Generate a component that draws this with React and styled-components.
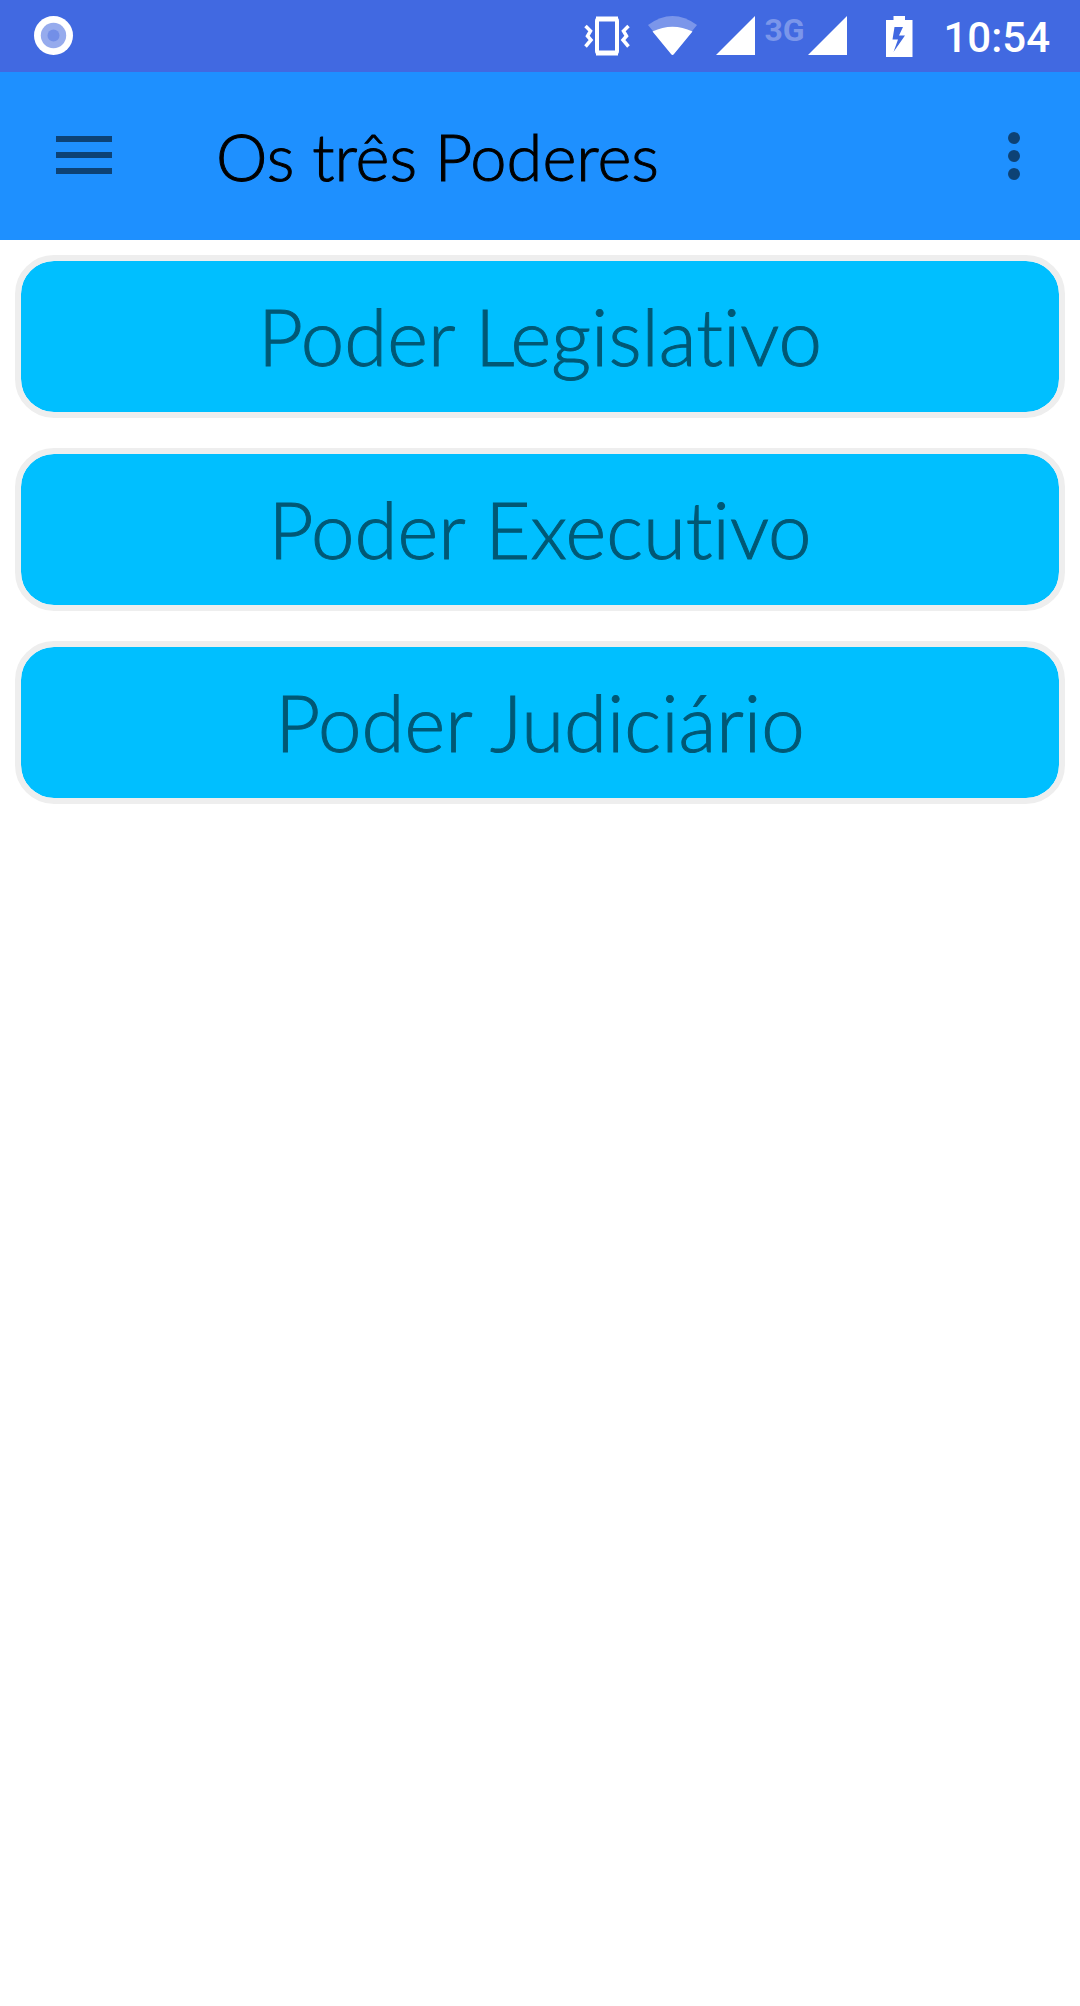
import React from 'react';
import styled, { createGlobalStyle } from 'styled-components';

const GlobalStyle = createGlobalStyle`
  *, *::before, *::after { box-sizing: border-box; }
  body { margin: 0; background: #ffffff; }
`;

const Screen = styled.div`
  min-height: 100vh;
  background: #ffffff;
  font-family: Lato, 'Open Sans', sans-serif;
  font-weight: 300;
  font-variant-ligatures: none;
`;

const StatusBar = styled.div`
  display: flex;
  align-items: center;
  justify-content: space-between;
  height: 72px;
  padding: 0 30px 0 34px;
  background: #4169e1;
  color: #ffffff;
  font-family: Roboto, sans-serif;
`;

const StatusGroup = styled.div`
  display: flex;
  align-items: center;
  gap: 18px;
`;

const Signal = styled.div`
  display: flex;
  align-items: center;
`;

const Icon = styled.svg`
  display: block;
  flex: none;
`;

const NetworkType = styled.span`
  align-self: flex-start;
  width: 52px;
  padding-left: 8px;
  font-size: 32px;
  line-height: 28px;
  font-weight: 700;
  color: #7b96ea;
`;

const Battery = styled.div`
  padding: 0 12px 0 20px;
`;

const Clock = styled.time`
  font-size: 42px;
  line-height: 48px;
  padding-top: 4px;
  font-weight: 500;
`;

const AppBar = styled.header`
  display: flex;
  align-items: center;
  height: 168px;
  padding: 0 24px;
  background: #1e90ff;
`;

const IconButton = styled.button`
  display: flex;
  align-items: center;
  justify-content: center;
  width: ${(p) => p.$width}px;
  height: 120px;
  padding: 0;
  border: 0;
  background: transparent;
  color: rgba(0, 0, 0, 0.54);
`;

const Title = styled.h1`
  flex: 1;
  margin: 0;
  padding-left: 72px;
  font-size: 65px;
  line-height: 80px;
  font-weight: 300;
  color: #000000;
  -webkit-text-stroke: 1px currentColor;
`;

const PowerList = styled.main`
  display: grid;
  gap: 30px;
  padding: 15px;
`;

const PowerButton = styled.button`
  width: 100%;
  padding: 27px 24px 28px;
  border: 6px solid #eeeeee;
  border-radius: 39px;
  background: #00bfff;
  color: #005875;
  font: inherit;
  font-variant-ligatures: none;
  font-size: 78px;
  line-height: 96px;
  background-clip: padding-box;
  -webkit-text-stroke: 1px currentColor;
`;

const powers = ['Poder Legislativo', 'Poder Executivo', 'Poder Judiciário'];

function SignalIcon() {
  return (
    <Icon width="40" height="40" viewBox="0 0 40 40" aria-hidden="true">
      <path d="M39 0V39H0Z" fill="currentColor" />
    </Icon>
  );
}

export default function App() {
  return (
    <Screen>
      <GlobalStyle />
      <StatusBar>
        <Icon width="40" height="40" viewBox="0 0 40 40" aria-hidden="true">
          <circle cx="19.5" cy="19.5" r="19.5" fill="#ffffff" />
          <circle cx="19.5" cy="19.5" r="12.7" fill="#96abed" />
          <circle cx="19.5" cy="19.5" r="6" fill="#738fe7" />
        </Icon>
        <StatusGroup>
          <Icon width="46" height="40" viewBox="0 0 46 40" fill="none" stroke="currentColor" aria-hidden="true">
            <rect x="13" y="3" width="20" height="34" rx="2" strokeWidth="4" />
            <path d="M12 3H34M12 37H34" strokeWidth="5" />
            <path d="M1.5 10 6.5 15 3.5 20 7 24 1.5 30.500M44.500 10 39.500 15 42.500 20 39 24 44.500 30.500" strokeWidth="3.500" />
          </Icon>
          <Icon width="50" height="40" viewBox="0 0 50 40" aria-hidden="true">
            <path d="M0 9Q24.500-9 49 9L24.500 39Z" fill="#7b96ea" />
            <path d="M4.500 15.500Q24.500 6 44.500 15.500L26 38Q24.500 40 23 38Z" fill="currentColor" />
          </Icon>
          <Signal>
            <SignalIcon />
            <NetworkType>3G</NetworkType>
            <SignalIcon />
          </Signal>
          <Battery>
            <Icon width="27" height="41" viewBox="0 0 27 41" aria-hidden="true">
              <path
                fillRule="evenodd"
                d="M7.500 0H19V4H26.500V41H0V4H7.500ZM8.500 11 6.500 23.500H12L7.500 36 19 19.500H13L17 11Z"
                fill="currentColor"
              />
            </Icon>
          </Battery>
          <Clock>10:54</Clock>
        </StatusGroup>
      </StatusBar>
      <AppBar>
        <IconButton $width={120} type="button" aria-label="Menu">
          <Icon width="56" height="40" viewBox="0 0 56 40" fill="currentColor" aria-hidden="true">
            <path d="M0 0H56V6H0ZM0 16H56V22H0ZM0 32H56V38H0Z" />
          </Icon>
        </IconButton>
        <Title>Os três Poderes</Title>
        <IconButton $width={84} type="button" aria-label="Mais opções">
          <Icon width="12" height="48" viewBox="0 0 12 48" fill="currentColor" aria-hidden="true">
            <circle cx="6" cy="6" r="6" />
            <circle cx="6" cy="24" r="6" />
            <circle cx="6" cy="42" r="6" />
          </Icon>
        </IconButton>
      </AppBar>
      <PowerList>
        {powers.map((name) => (
          <PowerButton key={name} type="button">
            {name}
          </PowerButton>
        ))}
      </PowerList>
    </Screen>
  );
}
